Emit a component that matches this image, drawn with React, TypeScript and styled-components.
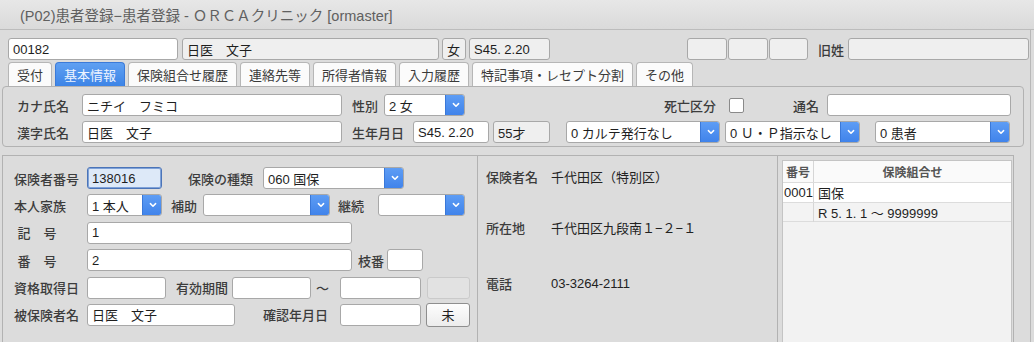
import React from "react";
import styled, { createGlobalStyle, css } from "styled-components";

const Global = createGlobalStyle`
  html, body { margin: 0; padding: 0; }
  body {
    background: #dcdcdc;
    font-family: "Liberation Sans", "Noto Sans CJK JP", sans-serif;
    font-size: 13px;
    color: #222;
    width: 1034px;
    height: 342px;
    overflow: hidden;
  }
`;

const Page = styled.div`
  width: 1034px;
  height: 342px;
  overflow: hidden;
  position: relative;
`;

const TitleBar = styled.div`
  height: 29px;
  display: flex;
  align-items: center;
  padding-left: 20px;
  font-size: 14.5px;
  color: #606060;
  background: linear-gradient(#e7e7e7, #dadada);
  border-bottom: 1px solid #bcbcbc;
`;

const Row = styled.div<{ $mt?: number; $pl?: number; $h?: number }>`
  display: flex;
  align-items: center;
  height: ${(p) => p.$h ?? 22}px;
  margin-top: ${(p) => p.$mt ?? 0}px;
  padding-left: ${(p) => p.$pl ?? 0}px;
`;

type Variant = "white" | "gray" | "focus" | "disabled";

const Field = styled.div<{ $w: number; $ml?: number; $v?: Variant }>`
  box-sizing: border-box;
  flex: 0 0 auto;
  width: ${(p) => p.$w}px;
  height: 22px;
  margin-left: ${(p) => p.$ml ?? 0}px;
  border: 1px solid #a8a8a8;
  border-radius: 3px;
  padding: 0 4px;
  display: flex;
  align-items: center;
  white-space: nowrap;
  overflow: hidden;
  color: #1e1e1e;
  background: #ffffff;
  ${(p) =>
    p.$v === "gray" &&
    css`
      background: #efefef;
    `}
  ${(p) =>
    p.$v === "focus" &&
    css`
      background: #dde9f8;
      border: 1px solid #4b74b8;
      box-shadow: inset 0 0 0 1px #7fa2d8;
    `}
  ${(p) =>
    p.$v === "disabled" &&
    css`
      background: #e2e2e2;
      border-color: #cacaca;
    `}
`;

const SelectBox = styled.div<{ $w: number; $ml?: number }>`
  box-sizing: border-box;
  flex: 0 0 auto;
  width: ${(p) => p.$w}px;
  height: 22px;
  margin-left: ${(p) => p.$ml ?? 0}px;
  border: 1px solid #a8a8a8;
  border-radius: 3px;
  background: #fff;
  display: flex;
  overflow: hidden;
`;

const SelectText = styled.div`
  flex: 1;
  display: flex;
  align-items: center;
  padding-left: 4px;
  white-space: nowrap;
  overflow: hidden;
  color: #1e1e1e;
`;

const ArrowBtn = styled.div`
  width: 19px;
  flex: 0 0 19px;
  margin: -1px -1px -1px 0;
  background: linear-gradient(#5f9ef5, #3f82ea);
  border-left: 1px solid #3a78d8;
  display: flex;
  align-items: center;
  justify-content: center;
`;

const Label = styled.div<{ $w?: number; $ml?: number }>`
  flex: 0 0 auto;
  width: ${(p) => (p.$w ? `${p.$w}px` : "auto")};
  margin-left: ${(p) => p.$ml ?? 0}px;
  color: #3c3c3c;
  font-weight: 500;
  white-space: nowrap;
`;

const Tabs = styled.div`
  display: flex;
  gap: 3px;
  height: 24px;
  margin-top: 2px;
  padding-left: 8px;
`;

const Tab = styled.div<{ $active?: boolean }>`
  box-sizing: border-box;
  height: 24px;
  padding: 0 8px;
  display: flex;
  align-items: center;
  border: 1px solid #b6b6b6;
  border-bottom: none;
  border-radius: 4px 4px 0 0;
  background: #fbfbfb;
  color: #3a3a3a;
  white-space: nowrap;
  ${(p) =>
    p.$active &&
    css`
      background: linear-gradient(#5fa0f2, #3d84e6);
      border-color: #3b7ad8;
      color: #eef4ff;
    `}
`;

const TopPanel = styled.div`
  box-sizing: border-box;
  margin-left: 2px;
  width: 1022px;
  height: 61px;
  border: 1px solid #b2b2b2;
  border-radius: 4px;
  padding: 7px 0 0 14px;
`;

const Check = styled.div<{ $ml?: number }>`
  box-sizing: border-box;
  width: 15px;
  height: 15px;
  margin-left: ${(p) => p.$ml ?? 0}px;
  border: 1px solid #8a8a8a;
  border-radius: 2px;
  background: #fff;
`;

const Lower = styled.div`
  box-sizing: border-box;
  margin: 8px 0 0 2px;
  width: 1012px;
  height: 200px;
  display: grid;
  grid-template-columns: 475px 300px 1fr;
  border-top: 1px solid #b2b2b2;
  border-left: 1px solid #b2b2b2;
  border-right: 1px solid #b2b2b2;
`;

const LeftCol = styled.div`
  border-right: 1px solid #b2b2b2;
  padding: 11px 0 0 11px;
  display: flex;
  flex-direction: column;
  gap: 5.4px;
`;

const MidCol = styled.div`
  border-right: 1px solid #b2b2b2;
  padding-left: 8px;
  display: flex;
  flex-direction: column;
`;

const InfoRow = styled.div<{ $mt: number }>`
  display: flex;
  align-items: center;
  height: 20px;
  margin-top: ${(p) => p.$mt}px;
`;

const InfoValue = styled.div`
  color: #222;
  white-space: nowrap;
`;

const RightCol = styled.div`
  padding: 4px 0 0 4px;
`;

const Table = styled.div`
  box-sizing: border-box;
  width: 230px;
  height: 190px;
  border: 1px solid #c4c4c4;
  background: #f2f2f2;
`;

const TRow = styled.div<{ $head?: boolean; $bg: string; $h: number }>`
  display: grid;
  grid-template-columns: 31px 1fr;
  height: ${(p) => p.$h}px;
  background: ${(p) => p.$bg};
  border-bottom: 1px solid #dcdcdc;
  ${(p) =>
    p.$head &&
    css`
      font-size: 12px;
      font-weight: 600;
    `}
`;

const TCell = styled.div<{ $center?: boolean; $first?: boolean }>`
  display: flex;
  align-items: center;
  justify-content: ${(p) => (p.$center ? "center" : "flex-start")};
  padding-left: ${(p) => (p.$center ? 0 : p.$first ? 1 : 4)}px;
  border-right: ${(p) => (p.$first ? "1px solid #d6d6d6" : "none")};
  white-space: nowrap;
  color: #1e1e1e;
`;

const HeadCell = styled(TCell)`
  color: #555;
`;

const Button = styled.div<{ $w: number; $ml?: number }>`
  box-sizing: border-box;
  width: ${(p) => p.$w}px;
  height: 24px;
  margin-left: ${(p) => p.$ml ?? 0}px;
  border: 1px solid #8e8e8e;
  border-radius: 3px;
  background: linear-gradient(#fdfdfd, #ececec);
  display: flex;
  align-items: center;
  justify-content: center;
  color: #222;
`;

const RightEdge = styled.div`
  position: absolute;
  top: 30px;
  right: 3px;
  bottom: 0;
  width: 1px;
  background: #b8b8b8;
`;

const Chevron = () => (
  <svg width="8" height="6" viewBox="0 0 8 6">
    <path d="M1.4 1.6 L4 4.2 L6.6 1.6" fill="none" stroke="#fff" strokeWidth="1.5" strokeLinecap="round" strokeLinejoin="round" />
  </svg>
);

const Select: React.FC<{ w: number; ml?: number; text?: string }> = ({ w, ml, text }) => (
  <SelectBox $w={w} $ml={ml}>
    <SelectText>{text}</SelectText>
    <ArrowBtn>
      <Chevron />
    </ArrowBtn>
  </SelectBox>
);

export default function App() {
  return (
    <Page>
      <Global />
      <TitleBar>(P02)患者登録−患者登録 - ＯＲＣＡクリニック [ormaster]</TitleBar>

      <Row $mt={8} $pl={8}>
        <Field $w={170}>00182</Field>
        <Field $w={257} $ml={4} $v="gray">日医　文子</Field>
        <Field $w={24} $ml={3} $v="gray">女</Field>
        <Field $w={81} $ml={3} $v="gray">S45. 2.20</Field>
        <Field $w={40} $ml={137} $v="gray" />
        <Field $w={40} $ml={1} $v="gray" />
        <Field $w={39} $ml={1} $v="gray" />
        <Label $ml={10}>旧姓</Label>
        <Field $w={181} $ml={4} $v="gray" />
      </Row>

      <Tabs>
        <Tab>受付</Tab>
        <Tab $active>基本情報</Tab>
        <Tab>保険組合せ履歴</Tab>
        <Tab>連絡先等</Tab>
        <Tab>所得者情報</Tab>
        <Tab>入力履歴</Tab>
        <Tab>特記事項・レセプト分割</Tab>
        <Tab>その他</Tab>
      </Tabs>

      <TopPanel>
        <Row>
          <Label $w={65}>カナ氏名</Label>
          <Field $w={260}>ニチイ　フミコ</Field>
          <Label $w={26} $ml={10}>性別</Label>
          <Select w={81} ml={6} text="2 女" />
          <Label $w={52} $ml={199}>死亡区分</Label>
          <Check $ml={13} />
          <Label $w={26} $ml={49}>通名</Label>
          <Field $w={184} $ml={8} />
        </Row>
        <Row $mt={5}>
          <Label $w={65}>漢字氏名</Label>
          <Field $w={260}>日医　文子</Field>
          <Label $w={52} $ml={10}>生年月日</Label>
          <Field $w={76} $ml={9}>S45. 2.20</Field>
          <Field $w={57} $ml={4} $v="gray">55才</Field>
          <Select w={154} ml={16} text="0 カルテ発行なし" />
          <Select w={135} ml={5} text="0 Ｕ・Ｐ指示なし" />
          <Select w={135} ml={15} text="0 患者" />
        </Row>
      </TopPanel>

      <Lower>
        <LeftCol>
          <Row>
            <Label $w={73}>保険者番号</Label>
            <Field $w={75} $v="focus">138016</Field>
            <Label $w={65} $ml={26}>保険の種類</Label>
            <Select w={141} ml={10} text="060 国保" />
          </Row>
          <Row>
            <Label $w={73}>本人家族</Label>
            <Select w={75} text="1 本人" />
            <Label $w={26} $ml={9}>補助</Label>
            <Select w={127} ml={6} />
            <Label $w={26} $ml={8}>継続</Label>
            <Select w={87} ml={14} />
          </Row>
          <Row>
            <Label $w={73}>&nbsp;記　号</Label>
            <Field $w={265}>1</Field>
          </Row>
          <Row>
            <Label $w={73}>&nbsp;番　号</Label>
            <Field $w={265}>2</Field>
            <Label $w={26} $ml={6}>枝番</Label>
            <Field $w={36} $ml={3} />
          </Row>
          <Row>
            <Label $w={73}>資格取得日</Label>
            <Field $w={79} />
            <Label $w={52} $ml={10}>有効期間</Label>
            <Field $w={79} $ml={4} />
            <Label $w={14} $ml={5}>〜</Label>
            <Field $w={81} $ml={10} />
            <Field $w={43} $ml={6} $v="disabled" />
          </Row>
          <Row>
            <Label $w={73}>被保険者名</Label>
            <Field $w={148}>日医　文子</Field>
            <Label $w={65} $ml={28}>確認年月日</Label>
            <Field $w={81} $ml={12} />
            <Button $w={44} $ml={5}>未</Button>
          </Row>
        </LeftCol>

        <MidCol>
          <InfoRow $mt={10}>
            <Label $w={65}>保険者名</Label>
            <InfoValue>千代田区（特別区）</InfoValue>
          </InfoRow>
          <InfoRow $mt={31}>
            <Label $w={65}>所在地</Label>
            <InfoValue>千代田区九段南１−２−１</InfoValue>
          </InfoRow>
          <InfoRow $mt={36}>
            <Label $w={65}>電話</Label>
            <InfoValue>03-3264-2111</InfoValue>
          </InfoRow>
        </MidCol>

        <RightCol>
          <Table>
            <TRow $head $bg="#fafafa" $h={21}>
              <HeadCell $first $center>番号</HeadCell>
              <HeadCell $center>保険組合せ</HeadCell>
            </TRow>
            <TRow $bg="#ffffff" $h={19}>
              <TCell $first>0001</TCell>
              <TCell>国保</TCell>
            </TRow>
            <TRow $bg="#f3f3f3" $h={18}>
              <TCell $first />
              <TCell>R 5. 1. 1 〜 9999999</TCell>
            </TRow>
          </Table>
        </RightCol>
      </Lower>
      <RightEdge />
    </Page>
  );
}
